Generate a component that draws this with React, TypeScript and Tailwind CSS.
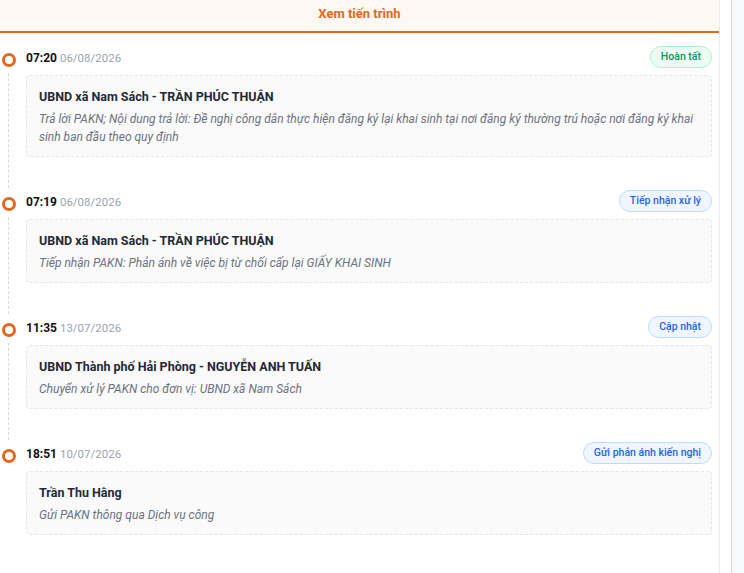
import React from "react";

type Item = {
  time: string;
  date: string;
  badge: string;
  tone: "green" | "blue";
  title: string;
  desc: React.ReactNode;
};

const items: Item[] = [
  {
    time: "07:20",
    date: "06/08/2026",
    badge: "Hoàn tất",
    tone: "green",
    title: "UBND xã Nam Sách - TRẦN PHÚC THUẬN",
    desc: "Trả lời PAKN; Nội dung trả lời: Đề nghị công dân thực hiện đăng ký lại khai sinh tại nơi đăng ký thường trú hoặc nơi đăng ký khai sinh ban đầu theo quy định",
  },
  {
    time: "07:19",
    date: "06/08/2026",
    badge: "Tiếp nhận xử lý",
    tone: "blue",
    title: "UBND xã Nam Sách - TRẦN PHÚC THUẬN",
    desc: "Tiếp nhận PAKN: Phản ánh về việc bị từ chối cấp lại GIẤY KHAI SINH",
  },
  {
    time: "11:35",
    date: "13/07/2026",
    badge: "Cập nhật",
    tone: "blue",
    title: "UBND Thành phố Hải Phòng - NGUYỄN ANH TUẤN",
    desc: "Chuyển xử lý PAKN cho đơn vị: UBND xã Nam Sách",
  },
  {
    time: "18:51",
    date: "10/07/2026",
    badge: "Gửi phản ánh kiến nghị",
    tone: "blue",
    title: "Trần Thu Hằng",
    desc: "Gửi PAKN thông qua Dịch vụ công",
  },
];

export default function App() {
  return (
    <div
      className="flex h-[573px] w-[744px] overflow-hidden bg-white"
      style={{ fontFamily: 'Roboto, "Noto Sans", sans-serif' }}
    >
      <div className="flex h-full w-[720px] flex-col border-r border-[#ececec]">
        <div className="flex h-[33px] items-center justify-center border-b-2 border-[#e2681f] bg-[#fff8f2] pb-[4px]">
          <span className="text-[13px] font-bold text-[#e2681f]">Xem tiến trình</span>
        </div>
        <div className="pt-[13px] pr-[7px]">
          {items.map((it, i) => {
            const last = i === items.length - 1;
            return (
              <div key={i} className="flex">
                <div className="flex w-[17px] flex-col items-center">
                  <div className="mt-[7px] h-[14px] w-[14px] rounded-full border-[3px] border-[#e2681f] bg-white" />
                  {!last && (
                    <div className="mt-[6px] mb-[2px] flex-1 border-l border-dashed border-[#dadada]" />
                  )}
                </div>
                <div className={`ml-[9px] flex-1 ${last ? "" : "pb-[33px]"}`}>
                  <div className="flex h-[22px] items-center justify-between">
                    <div className="leading-none">
                      <span className="text-[12px] font-bold text-[#111]">{it.time}</span>
                      <span className="ml-[3px] text-[11.5px] text-[#9ca3af]">{it.date}</span>
                    </div>
                    <span
                      className={
                        it.tone === "green"
                          ? "flex h-[22px] items-center rounded-full border border-[#a7f3d0] bg-[#ecfdf5] px-[10px] text-[10.5px] font-medium text-[#059669]"
                          : "flex h-[22px] items-center rounded-full border border-[#bfdbfe] bg-[#eff6ff] px-[10px] text-[10.5px] font-medium text-[#2563eb]"
                      }
                    >
                      {it.badge}
                    </span>
                  </div>
                  <div className="mt-[7px] rounded-[4px] border border-dashed border-[#e5e7eb] bg-[#fafafa] px-[12px] pt-[11px] pb-[10px]">
                    <div className="text-[12.5px] leading-[20px] font-bold text-[#1f2937]">{it.title}</div>
                    <div className="mt-[3px] text-[12px] leading-[18px] italic text-[#6b7280]">{it.desc}</div>
                  </div>
                </div>
              </div>
            );
          })}
        </div>
      </div>
      <div className="h-full w-[11px] bg-white" />
      <div className="h-full flex-1 border-l border-[#d6d6d6] bg-[#f8f9fb]" />
    </div>
  );
}
